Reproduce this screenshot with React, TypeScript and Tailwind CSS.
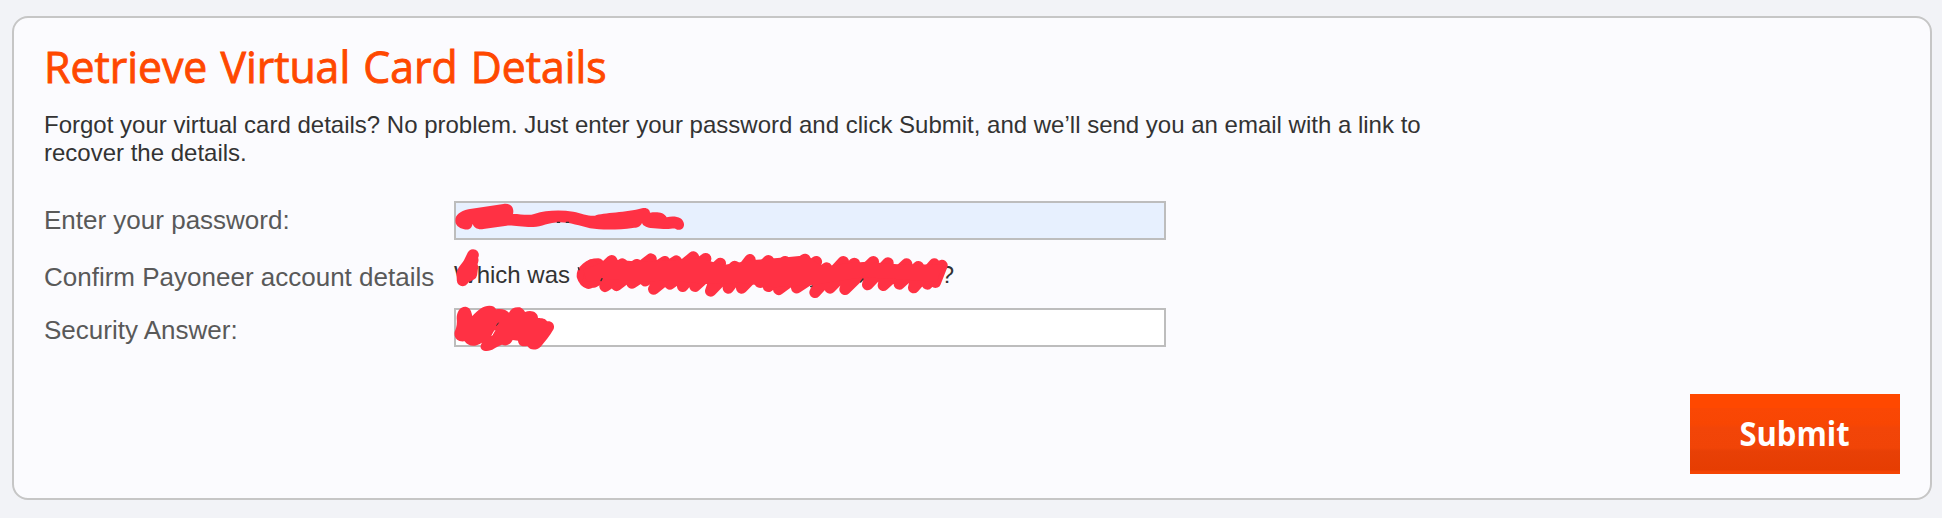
import React from "react";

function Marker() {
  return (
    <svg
      className="pointer-events-none absolute left-[396px] -top-[11px] h-[170px] w-[530px]"
      viewBox="0 0 1590 510"
      fill="none"
      stroke="#ff3144"
      strokeWidth="35"
      strokeLinecap="round"
      strokeLinejoin="round"
    >
      <path
        fill="#ff3144"
        stroke="none"
        d="M46 92C46 74 60 64 85 58L190 42C210 38 224 52 219 72C245 72 265 78 285 71C315 61 360 58 400 65C425 70 450 80 465 77C490 68 560 68 606 55C620 51 630 59 630 68C650 65 672 66 680 82C705 76 730 82 732 102C733 118 718 124 706 116C698 115 688 118 670 117L632 114C618 112 608 106 606 99C600 112 590 113 578 114C540 119 490 121 450 115C420 108 390 97 360 97C325 97 305 111 280 111C250 112 218 105 200 107L130 117C114 120 101 113 98 102C94 118 85 121 70 117C57 113 46 106 46 92Z"
      />
      <path d="M99 195L87 220C78 235 68 240 67 252L68 271L97 230L94 253L84 258L98 210" />
      <path strokeWidth="34" d="M475 222C445 222 426 242 427 258C430 268 436 276 446 280L470 270" />
      <path
        strokeWidth="34"
        d="M455 225L444 278L515 212L462 276L547 222L495 289L590 224L530 286L633 207L576 279L674 215L616 272L709 213L641 297L760 201L690 282L795 207L728 289L797 206L765 289L841 220L812 303L884 229L865 294L930 209L905 294L985 212L960 277L1035 215L985 289L1095 208L1016 298L1129 215L1070 293L1160 234L1125 307L1210 215L1170 294L1243 220L1215 298L1300 215L1283 284L1344 219L1330 286L1400 222L1378 282L1435 230L1421 293L1483 222L1462 282L1506 226L1486 277"
      />
      <path
        fill="#ff3144"
        stroke="none"
        d="M430 240L510 208L600 215L680 212L780 205L850 225L940 210L1040 202L1100 196L1150 232L1220 220L1280 215L1400 225L1510 222L1490 275L1440 272L1380 268L1270 262L1200 272L1120 285L1000 292L900 278L800 282L700 272L600 274L500 268L440 275Z"
      />
      <path
        fill="#ff3144"
        stroke="none"
        d="M50 385C50 365 60 349 77 350C92 352 94 366 97 378C115 358 130 347 148 347C160 347 166 352 168 358C185 354 200 360 207 368C213 355 225 350 240 352C250 357 253 362 255 366C275 358 294 367 294 384C305 384 318 386 321 394C338 392 345 405 341 417C328 440 315 455 302 470C290 482 270 482 262 468C245 472 235 465 234 452L218 450C212 463 200 470 186 464C165 472 158 482 140 483C122 483 117 470 126 458C105 472 85 470 74 454C55 457 40 445 44 425C48 415 52 405 50 385Z"
      />
      <g stroke="#333" strokeWidth="4">
        <path d="M352 97h7M379 97h7M415 233l2 6M483 272l3-6M1112 290l4-2M1262 276l7-9" />
        <path stroke="#fff" strokeWidth="3" d="M156 436l8-14" />
        <path strokeWidth="3" d="M170 406l5-7" />
      </g>
    </svg>
  );
}

export default function App() {
  return (
    <div className="h-[518px] bg-[#f2f3f7] pt-4 pr-[10px] pb-[18px] pl-3 font-['Liberation_Sans',Arial,sans-serif]">
      <main className="flex h-full flex-col rounded-2xl border-2 border-[#c6c6c6] bg-[#fbfbfe] pr-[30px] pb-6 pl-[30px]">
        <h1 className="mt-[18px] h-[60px] w-max origin-left scale-x-[0.972] whitespace-nowrap font-['Open_Sans','Noto_Sans',sans-serif] text-[44px] leading-[60px] font-medium text-[#ff4800] [-webkit-text-stroke:0.9px_#ff4800] [word-spacing:2px]">
          Retrieve Virtual Card Details
        </h1>
        <p className="mt-[15px] w-[1400px] text-2xl leading-7 text-[#333]">
          Forgot your virtual card details? No problem. Just enter your password and click Submit, and we’ll send you an email with a link to recover the details.
        </p>
        <form className="relative mt-[34px]" onSubmit={(e) => e.preventDefault()}>
          <div className="flex h-[39px] items-center text-[26px] text-[#595959]">
            <label htmlFor="password" className="w-[410px]">Enter your password:</label>
            <input id="password" type="password" className="h-[39px] w-[712px] border-2 border-[#bdbdbd] bg-[#e7f0fe]" />
          </div>
          <div className="flex h-[68px] items-center text-[26px] text-[#595959]">
            <span className="w-[410px] whitespace-nowrap pt-1.5">Confirm Payoneer account details</span>
            <span className="flex w-[500px] justify-between pt-0.5 text-2xl text-[#333]">
              <span>Which was</span>
              <span>?</span>
            </span>
          </div>
          <div className="flex h-[39px] items-center text-[26px] text-[#595959]">
            <label htmlFor="answer" className="w-[410px] pt-[5px]">Security Answer:</label>
            <input id="answer" type="text" className="h-[39px] w-[712px] border-2 border-[#bdbdbd] bg-white" />
          </div>
          <Marker />
        </form>
        <button
          type="button"
          className="mt-auto flex h-20 w-[210px] items-center justify-center self-end bg-[linear-gradient(#ff4800_0,#ff4800_14px,#fa4704_14px,#f84603_30px,#f24508_34px,#f14407_54px,#e84006_57px,#e63d02_76px,#f24305_77px,#f64605_80px)] pb-0.5 font-['Open_Sans','Noto_Sans',sans-serif] text-[34px] font-bold text-white"
        >
          <span className="scale-x-[0.91]">Submit</span>
        </button>
      </main>
    </div>
  );
}
